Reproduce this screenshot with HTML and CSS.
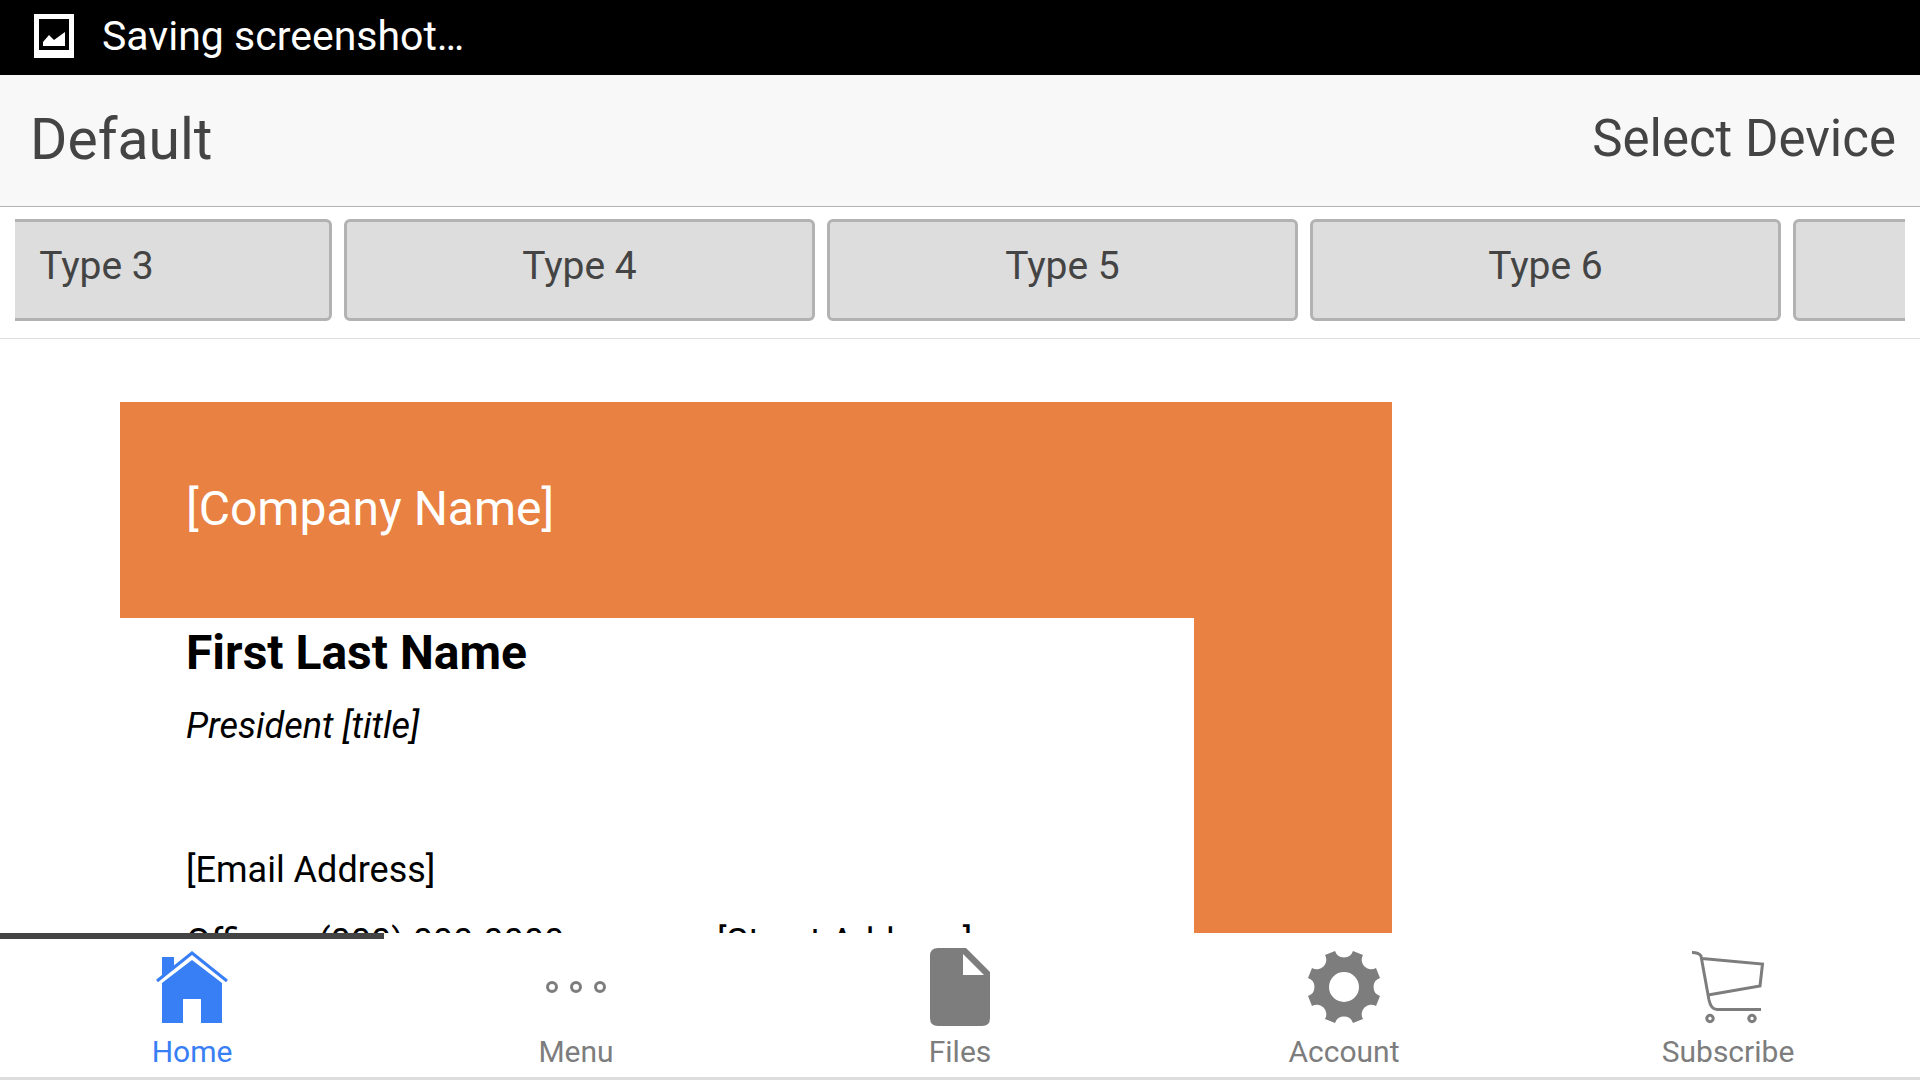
FILE: index.html
```html
<!DOCTYPE html>
<html lang="en">

<head>
  <meta charset="UTF-8">
  <meta name="viewport" content="width=device-width, initial-scale=1.0">
  <title>Business Card</title>
  <link rel="stylesheet" href="styles.css">
</head>

<body>

  <!-- Status bar -->
  <div class="status-bar">
    <svg class="status-icon" viewBox="0 0 40 44">
      <path fill="#fff" fill-rule="evenodd" d="M0 0H40V44H0ZM5 5V36H35V5Z" />
      <path fill="#fff" d="M9 32V28L15 21L20 26L31 18V32Z" />
    </svg>
    <span>Saving screenshot…</span>
  </div>

  <!-- Toolbar -->
  <header class="toolbar">
    <h1>Default</h1>
    <a href="#device">Select Device</a>
  </header>

  <!-- Card types -->
  <div class="types">
    <div class="types-scroll">
      <button type="button">Type 3</button>
      <button type="button">Type 4</button>
      <button type="button">Type 5</button>
      <button type="button">Type 6</button>
      <button type="button" aria-label="Type 7"></button>
    </div>
  </div>

  <!-- Card -->
  <main class="content">
    <div class="card">
      <div class="company">[Company Name]</div>
      <div class="card-body">
        <div class="details">
          <h2>First Last Name</h2>
          <p class="title">President [title]</p>
          <p class="email">[Email Address]</p>
          <div class="contact">
            <p class="phone"><span>Office:</span> <span>(000) 000-0000</span></p>
            <p>[Street Address]</p>
          </div>
        </div>
        <div class="stripe"></div>
      </div>
    </div>
  </main>

  <!-- Tabs -->
  <nav class="tabs">
    <a href="#home" class="active">
      <svg viewBox="0 0 78 78">
        <path fill="currentColor" d="M9 75V35L39 12L69 35V75H48V51H30V75ZM9 9H21V19L9 29Z" />
        <path fill="none" stroke="currentColor" stroke-width="3" d="M4 33L39 5L74 33" />
      </svg>
      <span>Home</span>
    </a>
    <a href="#menu">
      <svg viewBox="0 0 78 78">
        <g fill="none" stroke="currentColor" stroke-width="3">
          <circle cx="15" cy="39" r="4.5" />
          <circle cx="39" cy="39" r="4.5" />
          <circle cx="63" cy="39" r="4.5" />
        </g>
      </svg>
      <span>Menu</span>
    </a>
    <a href="#files">
      <svg viewBox="0 0 78 78">
        <path fill="currentColor" fill-rule="evenodd" d="M17 0H45L69 24V70Q69 78 61 78H17Q9 78 9 70V8Q9 0 17 0ZM42 6V27H63Z" />
      </svg>
      <span>Files</span>
    </a>
    <a href="#account">
      <svg viewBox="0 0 78 78">
        <path fill="currentColor" fill-rule="evenodd" d="M20 7L30 3A9.500 9.500 0 0 0 48 3L58 7A9.500 9.500 0 0 0 71 20L75 30A9.500 9.500 0 0 0 75 48L71 58A9.500 9.500 0 0 0 58 71L48 75A9.500 9.500 0 0 0 30 75L20 71A9.500 9.500 0 0 0 7 58L3 48A9.500 9.500 0 0 0 3 30L7 20A9.500 9.500 0 0 0 20 7ZM39 24A15 15 0 1 0 39 54A15 15 0 1 0 39 24Z" />
      </svg>
      <span>Account</span>
    </a>
    <a href="#subscribe">
      <svg viewBox="0 0 78 78">
        <g fill="none" stroke="currentColor" stroke-width="3">
          <path d="M3 4.500Q10 4.500 12 8L20 52Q22 61.500 28 61.500H72M13 10.500L73.500 16L71 38L19 47" />
          <circle cx="21" cy="70.500" r="3.200" />
          <circle cx="63" cy="70.500" r="3.200" />
        </g>
      </svg>
      <span>Subscribe</span>
    </a>
  </nav>

</body>

</html>
```
FILE: styles.css
```css
* {
  margin: 0;
  padding: 0;
  box-sizing: border-box;
  font-family: Roboto, sans-serif;
}

body {
  display: flex;
  flex-direction: column;
  height: 100vh;
  overflow: hidden;
  background: #fff;
}

a {
  color: inherit;
  text-decoration: none;
}

/* Status bar */
.status-bar {
  display: flex;
  align-items: center;
  gap: 28px;
  flex: none;
  height: 75px;
  padding: 0 34px 4px;
  background: #000;
  color: #fff;
  font-size: 41px;
}

.status-icon {
  width: 40px;
  height: 44px;
}

/* Toolbar */
.toolbar {
  display: flex;
  align-items: center;
  justify-content: space-between;
  flex: none;
  height: 132px;
  padding: 0 24px 4px 30px;
  background: #f8f8f8;
  border-bottom: 1px solid #b2b2b2;
  color: #444;
}

.toolbar h1 {
  padding-top: 2px;
  font-size: 57px;
  font-weight: 400;
}

.toolbar a {
  font-size: 51px;
}

/* Card types */
.types {
  flex: none;
  padding: 12px 15px 17px;
  border-bottom: 1px solid #ddd;
}

.types-scroll {
  display: flex;
  gap: 12px;
  overflow: hidden;
}

.types-scroll button {
  flex: none;
  width: 471px;
  height: 102px;
  padding-bottom: 8px;
  background: #ddd;
  border: 3px solid #b2b2b2;
  border-radius: 6px;
  color: #444;
  font-size: 39px;
}

/* the strip is scrolled part way through the first type */
.types-scroll button:first-child {
  margin-left: -154px;
}

/* Card */
.content {
  flex: 1;
  min-height: 0;
  overflow: hidden;
  padding: 63px 120px 0;
}

.card {
  max-width: 1272px;
}

.company {
  height: 216px;
  padding-left: 66px;
  background: #e88141;
  color: #fff;
  font-size: 48px;
  line-height: 214px;
}

.card-body {
  display: flex;
}

.details {
  flex: 1;
  padding-left: 66px;
  font-size: 36px;
  line-height: 72px;
}

.details h2 {
  margin-bottom: 2px;
  font-size: 48px;
  line-height: 70px;
}

.title {
  font-style: italic;
}

.email {
  margin-top: 72px;
}

.contact {
  display: grid;
  grid-template-columns: 531px 1fr;
}

.phone {
  display: flex;
  gap: 30px;
}

.stripe {
  width: 198px;
  min-height: 500px;
  background: #e88141;
}

/* Tabs */
.tabs {
  display: flex;
  flex: none;
  height: 147px;
  border-bottom: 3px solid #ddd;
}

.tabs a {
  display: flex;
  flex: 1;
  flex-direction: column;
  align-items: center;
  border-top: 6px solid transparent;
  padding-top: 9px;
  color: #7d7d7d;
  font-size: 30px;
}

.tabs a.active {
  border-top-color: #444;
  color: #387ef5;
}

.tabs svg {
  width: 78px;
  height: 78px;
  margin-bottom: 8px;
}
```
